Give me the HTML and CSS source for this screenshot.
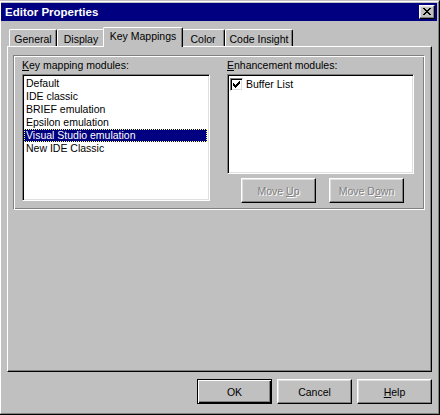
FILE: index.html
```html
<!DOCTYPE html>
<html>
<head>
<meta charset="utf-8">
<title>Editor Properties</title>
<link rel="stylesheet" href="styles.css">
</head>
<body>
<div class="window">
  <div class="frame">
    <div class="titlebar">
      <span class="title">Editor Properties</span>
      <span class="close">
        <svg width="8" height="7" viewBox="0 0 8 7" shape-rendering="crispEdges">
          <path d="M0 0h2v1h-2zM1 1h2v1h-2zM2 2h2v1h-2zM3 3h2v1h-2zM2 4h2v1h-2zM1 5h2v1h-2zM0 6h2v1h-2zM6 0h2v1h-2zM5 1h2v1h-2zM4 2h2v1h-2zM4 4h2v1h-2zM5 5h2v1h-2zM6 6h2v1h-2z" fill="#000"/>
        </svg>
      </span>
    </div>
    <div class="client">
      <div class="tabs">
        <div class="tab t-general">General</div>
        <div class="tab t-display">Display</div>
        <div class="tab active t-keys">Key Mappings</div>
        <div class="tab t-color">Color</div>
        <div class="tab t-code">Code Insight</div>
      </div>
      <div class="page">
        <div class="group">
          <div class="col col-left">
            <div class="label"><u>K</u>ey mapping modules:</div>
            <div class="listbox list-left">
              <div class="item">Default</div>
              <div class="item">IDE classic</div>
              <div class="item">BRIEF emulation</div>
              <div class="item">Epsilon emulation</div>
              <div class="item selected">Visual Studio emulation</div>
              <div class="item">New IDE Classic</div>
            </div>
          </div>
          <div class="col col-right">
            <div class="label"><u>E</u>nhancement modules:</div>
            <div class="listbox list-right">
              <div class="item check-item">
                <span class="checkbox">
                  <svg width="7" height="7" viewBox="0 0 7 7" shape-rendering="crispEdges">
                    <path d="M6 0h1v3h-1zM5 1h1v3h-1zM4 2h1v3h-1zM3 3h1v3h-1zM2 4h1v3h-1zM1 3h1v3h-1zM0 2h1v3h-1z" fill="#000"/>
                  </svg>
                </span>
                <span>Buffer List</span>
              </div>
            </div>
            <div class="move-row">
              <div class="btn disabled"><span>Move <u>U</u>p</span></div>
              <div class="btn disabled"><span>Move D<u>o</u>wn</span></div>
            </div>
          </div>
        </div>
      </div>
      <div class="button-row">
        <div class="btn default"><span>OK</span></div>
        <div class="btn"><span>Cancel</span></div>
        <div class="btn"><span><u>H</u>elp</span></div>
      </div>
    </div>
  </div>
</div>
</body>
</html>
```

FILE: styles.css
```css
html, body {
  margin: 0;
  padding: 0;
  background: #c0c0c0;
}

body {
  font-family: "Liberation Sans", Arial, sans-serif;
  font-size: 10.5px;
  color: #000;
}

.window {
  width: 440px;
  height: 415px;
  box-sizing: border-box;
  border-style: solid;
  border-width: 1px 1px 1px 0;
  border-color: #c0c0c0 #000 #000 transparent;
  background: #c0c0c0;
}

.frame {
  height: 100%;
  box-sizing: border-box;
  border: 1px solid;
  border-color: #fff #808080 #808080 #fff;
  padding: 1px 1px 1px 0;
  display: flex;
  flex-direction: column;
}

.titlebar {
  height: 18px;
  flex: none;
  background: #000080;
  display: flex;
  align-items: center;
  justify-content: space-between;
  padding: 0 2px 0 4px;
}

.title {
  color: #fff;
  font-weight: bold;
  font-size: 11.5px;
  line-height: 18px;
}

.close {
  width: 16px;
  height: 14px;
  box-sizing: border-box;
  background: #c0c0c0;
  border: 1px solid;
  border-color: #fff #000 #000 #fff;
  box-shadow: inset -1px -1px #808080, inset 1px 1px #dfdfdf;
  display: flex;
  align-items: center;
  justify-content: center;
  padding: 0 1px 1px 0;
}

.close svg {
  display: block;
}

.client {
  flex: 1;
  display: flex;
  flex-direction: column;
  padding: 6px 5px 0 6px;
}

.tabs {
  height: 20px;
  flex: none;
  display: flex;
  align-items: flex-end;
  padding-left: 2px;
}

.tab {
  height: 18px;
  box-sizing: border-box;
  border-top: 1px solid #fff;
  border-left: 1px solid #fff;
  border-right: 1px solid #000;
  border-radius: 2px 2px 0 0;
  box-shadow: inset -1px 0 #808080;
  background: #c0c0c0;
  text-align: center;
  line-height: 13px;
  padding-top: 3px;
  white-space: nowrap;
}

.tab.active {
  height: 20px;
  padding-top: 2px;
  margin: 0 -2px;
  position: relative;
  z-index: 1;
}

.t-general { width: 48px; }
.t-display { width: 48px; }
.t-keys { width: 80px; }
.t-color { width: 44px; }
.t-code { width: 68px; }

.page {
  height: 326px;
  flex: none;
  box-sizing: border-box;
  margin-top: -1px;
  border: 1px solid;
  border-color: #fff #000 #000 #fff;
  box-shadow: inset -1px -1px #808080;
  padding: 8px 6px 0 5px;
}

.group {
  height: 155px;
  box-sizing: border-box;
  border: 1px solid;
  border-color: #808080 #fff #fff #808080;
  box-shadow: inset 1px 1px #fff, inset -1px -1px #808080;
  display: flex;
  padding: 3px 0 0 8px;
  gap: 17px;
}

.col {
  display: flex;
  flex-direction: column;
}

.col-left { width: 188px; }
.col-right { width: 187px; }

.label {
  line-height: 13px;
  height: 13px;
  margin-bottom: 2px;
  white-space: nowrap;
}

.listbox {
  box-sizing: border-box;
  background: #fff;
  border: 1px solid;
  border-color: #808080 #fff #fff #808080;
  box-shadow: inset 1px 1px #000, inset -1px -1px #dfdfdf;
  padding: 2px 2px 0 1px;
}

.list-left { height: 127px; }
.list-right { height: 100px; }

.item {
  height: 13px;
  line-height: 13px;
  padding-left: 2px;
  white-space: nowrap;
}

.item.selected {
  background: #000080;
  color: #fff;
  outline: 1px dotted #ffff80;
  outline-offset: -1px;
}

.check-item {
  display: flex;
  align-items: center;
  gap: 3px;
  height: 15px;
  line-height: 15px;
  padding-left: 1px;
}

.checkbox {
  width: 13px;
  height: 13px;
  box-sizing: border-box;
  background: #fff;
  border: 1px solid;
  border-color: #808080 #fff #fff #808080;
  box-shadow: inset 1px 1px #000, inset -1px -1px #dfdfdf;
  display: flex;
  align-items: center;
  justify-content: center;
}

.checkbox svg {
  display: block;
}

.move-row {
  display: flex;
  gap: 13px;
  padding-left: 14px;
  margin-top: 4px;
}

.btn {
  width: 75px;
  height: 25px;
  box-sizing: border-box;
  background: #c0c0c0;
  border: 1px solid;
  border-color: #fff #000 #000 #fff;
  box-shadow: inset -1px -1px #808080, inset 1px 1px #dfdfdf;
  display: flex;
  align-items: center;
  justify-content: center;
  white-space: nowrap;
}

.btn.disabled {
  color: #808080;
  text-shadow: 1px 1px #fff;
}

.btn.default {
  border-color: #000;
  box-shadow: inset 1px 1px #fff, inset -1px -1px #000, inset -2px -2px #808080;
}

.button-row {
  display: flex;
  justify-content: flex-end;
  gap: 5px;
  margin-top: 7px;
}
```
